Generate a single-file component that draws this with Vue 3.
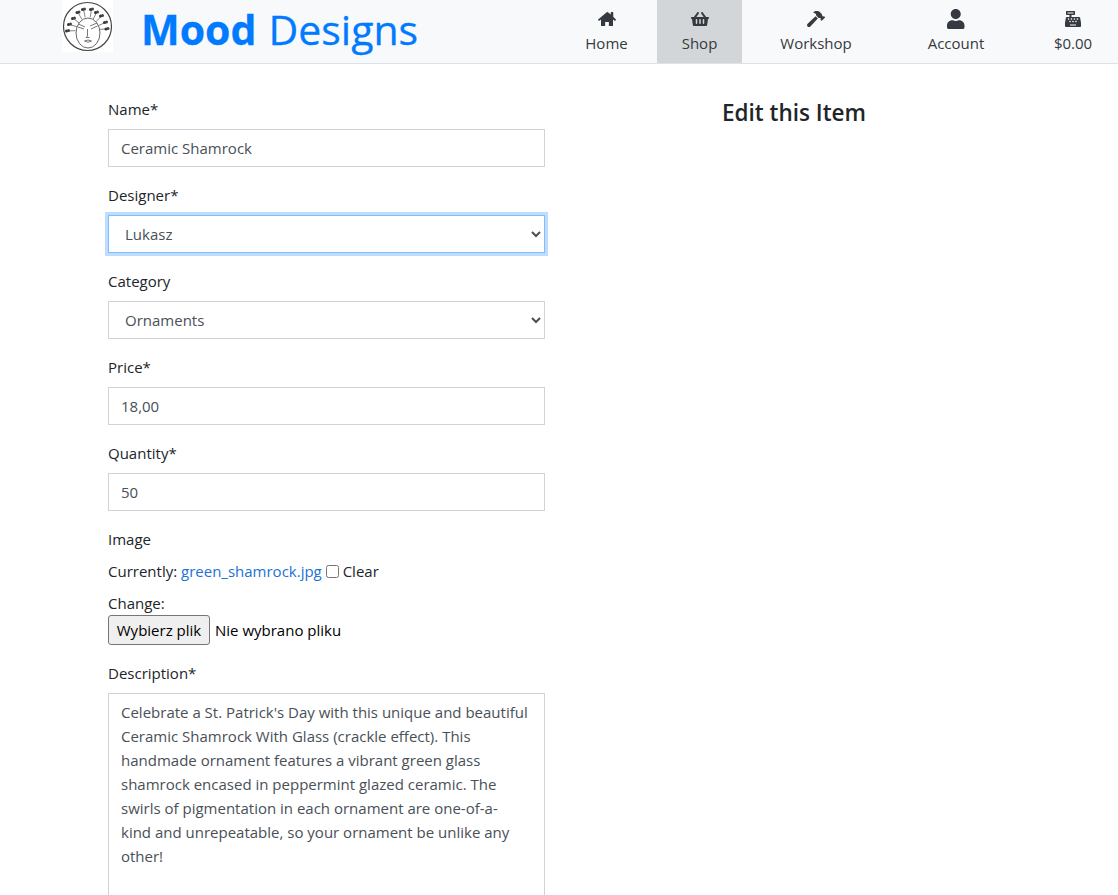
<script setup>
const navItems = [
  { label: 'Home', vb: '0 0 576 512', size: 'md', d: 'M288 32L4 268a12 12 0 0 0-1.6 17l22 27a12 12 0 0 0 17 1.600L96 268V464a16 16 0 0 0 16 16h116V352h120v128h116a16 16 0 0 0 16-16V268l54.600 45.600a12 12 0 0 0 17-1.600l22-27a12 12 0 0 0-1.600-17L488 180V44a12 12 0 0 0-12-12h-56a12 12 0 0 0-12 12v70L318 43a48 48 0 0 0-30-11z' },
  { label: 'Shop', vb: '0 0 576 512', size: 'md', active: true, d: 'M576 216v16c0 13.255-10.745 24-24 24h-8l-26.113 182.788C514.509 462.435 494.257 480 470.37 480H105.63c-23.887 0-44.139-17.565-47.518-41.212L32 256h-8c-13.255 0-24-10.745-24-24v-16c0-13.255 10.745-24 24-24h67.341l106.78-146.821c10.395-14.292 30.407-17.453 44.701-7.058 14.293 10.395 17.453 30.408 7.058 44.701L170.477 192h235.046L326.12 82.821c-10.395-14.292-7.234-34.306 7.059-44.701 14.291-10.395 34.306-7.235 44.701 7.058L484.659 192H552c13.255 0 24 10.745 24 24zM312 392V280c0-13.255-10.745-24-24-24s-24 10.745-24 24v112c0 13.255 10.745 24 24 24s24-10.745 24-24zm112 0V280c0-13.255-10.745-24-24-24s-24 10.745-24 24v112c0 13.255 10.745 24 24 24s24-10.745 24-24zm-224 0V280c0-13.255-10.745-24-24-24s-24 10.745-24 24v112c0 13.255 10.745 24 24 24s24-10.745 24-24z' },
  { label: 'Workshop', vb: '0 0 576 512', size: 'md', d: 'M571.31 193.94l-22.63-22.63c-6.25-6.25-16.38-6.25-22.63 0l-11.31 11.31-28.9-28.9c5.63-21.31.36-44.9-16.35-61.61l-45.25-45.25c-62.48-62.48-163.79-62.48-226.28 0l90.51 45.25v18.75c0 16.97 6.74 33.25 18.75 45.25l49.14 49.14c16.71 16.71 40.3 21.98 61.61 16.35l28.9 28.9-11.31 11.31c-6.25 6.25-6.25 16.38 0 22.63l22.63 22.63c6.25 6.25 16.38 6.25 22.63 0l90.51-90.51c6.23-6.24 6.23-16.37-.02-22.62zm-286.72-15.2c-3.7-3.7-6.84-7.79-9.85-11.95L19.64 404.96c-25.57 23.88-26.26 64.19-1.53 88.93s65.05 24.05 88.93-1.53l238.13-255.07c-3.96-2.91-7.9-5.87-11.44-9.41l-49.14-49.14z' },
  { label: 'Account', vb: '0 0 448 512', size: 'lg', d: 'M224 256c70.7 0 128-57.3 128-128S294.7 0 224 0 96 57.3 96 128s57.3 128 128 128zm89.6 32h-16.7c-22.2 10.2-46.9 16-72.9 16s-50.6-5.8-72.9-16h-16.7C60.2 288 0 348.2 0 422.4V464c0 26.5 21.5 48 48 48h352c26.5 0 48-21.5 48-48v-41.6c0-74.2-60.2-134.4-134.4-134.4z' },
  { label: '$0.00', vb: '0 0 512 512', size: 'md', d: 'M511.1 378.8l-26.7-160c-2.6-15.4-15.9-26.7-31.6-26.7H208v-64h96c8.8 0 16-7.2 16-16V16c0-8.8-7.2-16-16-16H48c-8.8 0-16 7.2-16 16v96c0 8.8 7.2 16 16 16h96v64H59.1c-15.6 0-29 11.3-31.6 26.7L.8 378.7c-.6 3.5-.9 7-.9 10.5V480c0 17.7 14.3 32 32 32h448c17.7 0 32-14.3 32-32v-90.7c.1-3.5-.2-7-.8-10.5zM280 248c0-8.8 7.2-16 16-16h16c8.8 0 16 7.2 16 16v16c0 8.8-7.2 16-16 16h-16c-8.8 0-16-7.2-16-16v-16zm-32 64h16c8.8 0 16 7.2 16 16v16c0 8.8-7.2 16-16 16h-16c-8.8 0-16-7.2-16-16v-16c0-8.8 7.2-16 16-16zm-32-80c8.8 0 16 7.2 16 16v16c0 8.8-7.2 16-16 16h-16c-8.8 0-16-7.2-16-16v-16c0-8.8 7.2-16 16-16h16zM80 80V48h192v32H80zm40 200h-16c-8.8 0-16-7.2-16-16v-16c0-8.8 7.2-16 16-16h16c8.8 0 16 7.2 16 16v16c0 8.8-7.2 16-16 16zm16 64v-16c0-8.8 7.2-16 16-16h16c8.8 0 16 7.2 16 16v16c0 8.8-7.2 16-16 16h-16c-8.8 0-16-7.2-16-16zm216 112c0 4.4-3.6 8-8 8H168c-4.4 0-8-3.6-8-8v-16c0-4.4 3.6-8 8-8h176c4.4 0 8 3.6 8 8v16zm24-112c0 8.8-7.2 16-16 16h-16c-8.8 0-16-7.2-16-16v-16c0-8.8 7.2-16 16-16h16c8.8 0 16 7.2 16 16v16zm48-80c0 8.8-7.2 16-16 16h-16c-8.8 0-16-7.2-16-16v-16c0-8.8 7.2-16 16-16h16c8.8 0 16 7.2 16 16v16z' },
]

// 花苞位置按参考图里的 logo 量出来
const buds = [
  [5.5, 31], [7.5, 24.5], [11.5, 18.5], [16, 12.5], [21.5, 9.5],
  [29.5, 9.5], [34.5, 12.5], [39.5, 16], [43.5, 22.5], [45, 29],
].map(([x, y]) => {
  const dx = 26 - x
  const dy = 30 - y
  const len = Math.hypot(dx, dy)
  return { x, y, ex: x + (dx / len) * 8, ey: y + (dy / len) * 8 }
})

const description = `Celebrate a St. Patrick's Day with this unique and beautiful
Ceramic Shamrock With Glass (crackle effect). This
handmade ornament features a vibrant green glass
shamrock encased in peppermint glazed ceramic. The
swirls of pigmentation in each ornament are one-of-a-
kind and unrepeatable, so your ornament be unlike any
other!`
</script>

<template>
  <div class="page">
    <header class="navbar">
      <svg class="logo" viewBox="0 0 51 52" aria-label="Mood Designs logo">
        <rect width="51" height="52" fill="#fff" />
        <circle cx="25.5" cy="26.5" r="24" fill="none" stroke="#444" stroke-width="1.2" />
        <g v-for="bud in buds" :key="bud.x">
          <path :d="`M${bud.x} ${bud.y}L${bud.ex} ${bud.ey}`" stroke="#666" stroke-width=".8" fill="none" />
          <circle :cx="bud.x - 1" :cy="bud.y" r="1.5" fill="#333" />
          <circle :cx="bud.x + 1" :cy="bud.y - .6" r="1.5" fill="#444" />
        </g>
        <ellipse cx="26" cy="33" rx="12" ry="15" fill="#fff" stroke="#555" stroke-width=".9" />
        <path d="M16.5 24l6.5 3M35 23l-7 3M16 27l6 2M35.5 26l-6.5 3" stroke="#555" stroke-width=".8" fill="none" />
        <path d="M25.5 29v7l-1.5 1.5h3.5M22.5 41q3.5-2 7 0q-3.5 2.5-7 0z" stroke="#555" stroke-width=".8" fill="none" />
      </svg>
      <a class="brand"><b>Mood</b> Designs</a>
      <nav class="nav">
        <a v-for="item in navItems" :key="item.label" class="nav-item" :class="{ active: item.active }">
          <span class="icon-box">
            <svg :class="item.size" :viewBox="item.vb"><path fill="#343a40" :d="item.d" /></svg>
          </span>
          <span>{{ item.label }}</span>
        </a>
      </nav>
    </header>

    <main class="content">
      <form class="item-form">
        <div class="group">
          <label>Name*</label>
          <input class="control" value="Ceramic Shamrock" />
        </div>
        <div class="group">
          <label>Designer*</label>
          <select class="control picker focused">
            <option>Lukasz</option>
          </select>
        </div>
        <div class="group">
          <label>Category</label>
          <select class="control picker">
            <option>Ornaments</option>
          </select>
        </div>
        <div class="group">
          <label>Price*</label>
          <input class="control" value="18,00" />
        </div>
        <div class="group">
          <label>Quantity*</label>
          <input class="control" value="50" />
        </div>
        <div class="group">
          <label>Image</label>
          <div class="current">
            Currently: <a class="file-link">green_shamrock.jpg</a>
            <input type="checkbox" class="clear-box" /> Clear
          </div>
          <div class="change">Change:</div>
          <div class="file-row">
            <button type="button" class="file-btn">Wybierz plik</button>
            <span>Nie wybrano pliku</span>
          </div>
        </div>
        <div class="group">
          <label>Description*</label>
          <textarea class="control area" :value="description"></textarea>
        </div>
      </form>
      <aside class="side">
        <h2>Edit this Item</h2>
      </aside>
    </main>
  </div>
</template>

<style>
html, body {
  margin: 0;
  overflow: hidden;
}
</style>

<style scoped>
.page {
  height: 895px;
  overflow: hidden;
  background: #fff;
  color: #212529;
  font-family: "Open Sans", "Noto Sans", sans-serif;
  font-size: 15px;
  line-height: 24px;
}

.navbar {
  display: flex;
  height: 63px;
  background: #f8f9fa;
  border-bottom: 1px solid #dee2e6;
}

.logo {
  width: 51px;
  height: 52px;
  margin-left: 62px;
  filter: blur(0.35px);
}

.brand {
  margin-left: 28px;
  font-size: 41px;
  line-height: 58px;
  word-spacing: 1.5px;
  color: #007bff;
  -webkit-text-stroke: 0.3px #007bff;
}

.brand b {
  font-weight: 700;
}

.nav {
  display: grid;
  grid-template-columns: 101px 85px 148px 132px 96px;
  margin-left: auto;
}

.nav-item {
  display: flex;
  flex-direction: column;
  align-items: center;
  color: #343a40;
}

.nav-item:last-child {
  padding-left: 6px;
}

.nav-item.active {
  background: #d3d6d8;
}

.icon-box {
  display: flex;
  align-items: center;
  height: 20px;
  margin: 9px 0 2px;
}

.md {
  height: 16px;
}

.lg {
  height: 20px;
}

.content {
  display: flex;
  padding: 33px 0 0 108px;
}

.item-form {
  width: 437px;
  flex: none;
}

.side {
  margin-left: 177px;
}

.side h2 {
  margin: 0;
  padding-top: 1px;
  font-size: 22.5px;
  line-height: 29px;
  font-weight: 600;
}

.group {
  margin-bottom: 16px;
}

label {
  display: block;
  margin-bottom: 8px;
}

.control {
  display: block;
  box-sizing: border-box;
  width: 100%;
  height: 38px;
  padding: 6px 12px;
  border: 1px solid #ced4da;
  border-radius: 0;
  background: #fff;
  color: #495057;
  font: inherit;
  outline: none;
}

.focused {
  border-color: #80bdff;
  box-shadow: 0 0 0 3px rgba(0, 123, 255, 0.25);
}

.current {
  margin-bottom: 8px;
}

.file-link {
  color: #1b72d8;
}

.clear-box {
  margin: 0 0 0 4px;
  vertical-align: -1px;
}

.file-row {
  display: flex;
  align-items: center;
  gap: 5px;
  height: 30px;
}

.file-btn {
  box-sizing: border-box;
  height: 30px;
  width: 102px;
  padding: 0;
  border: 1px solid #767676;
  border-radius: 3px;
  background: #efefef;
  color: #000;
  font: inherit;
}

.file-row span {
  color: #000;
}

.area {
  height: 240px;
  white-space: pre;
  overflow: hidden;
  resize: none;
}
</style>
